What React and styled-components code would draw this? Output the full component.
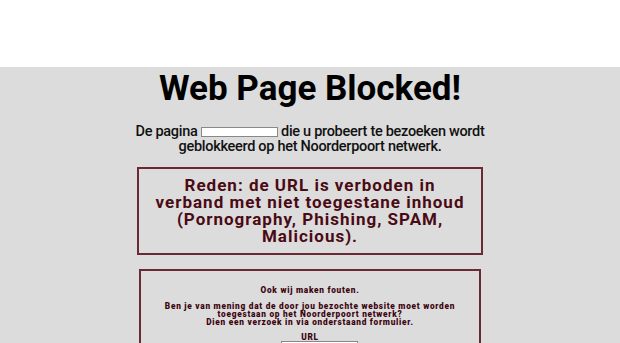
import React from "react";
import styled, { createGlobalStyle } from "styled-components";

const Global = createGlobalStyle`
  html, body { margin: 0; padding: 0; }
  body { background: #dcdcdc; font-family: Roboto, "Liberation Sans", sans-serif; }
`;

const Header = styled.header`
  height: 67px;
  background: #ffffff;
`;

const Main = styled.main`
  width: 350px;
  margin: 0 auto;
  display: flex;
  flex-direction: column;
  align-items: center;
  text-align: center;
`;

const Title = styled.h1`
  margin: 2px 0 0;
  font-size: 35px;
  font-weight: 700;
  line-height: 40px;
  color: #000;
  white-space: nowrap;
`;

const Intro = styled.p`
  margin: 15px 0 0;
  font-size: 14.5px;
  line-height: 15px;
  font-weight: 500;
  letter-spacing: -0.3px;
  color: #111;
  width: 360px;
  flex-shrink: 0;
`;

const UrlField = styled.input`
  width: 75px;
  height: 8px;
  padding: 0;
  border: 1px solid #888;
  background: #fff;
  vertical-align: middle;
  margin: 0;
`;

const ReasonBox = styled.div`
  box-sizing: border-box;
  width: 346px;
  margin-top: 13px;
  border: 2px solid #6b2a33;
  padding: 8px 14px;
  color: #4a0a14;
  font-size: 17px;
  font-weight: 700;
  line-height: 17px;
  letter-spacing: 1px;
`;

const RequestBox = styled.div`
  box-sizing: border-box;
  width: 342px;
  margin-top: 14px;
  border: 2px solid #6b2a33;
  padding: 15px 8px 0;
  color: #3c0510;
  font-size: 8.3px;
  font-weight: 900;
  line-height: 8px;
  letter-spacing: 0.72px;
  display: flex;
  flex-direction: column;
  align-items: center;
`;

const Small = styled.p`
  margin: 0 0 8px;
`;

const Label = styled.div`
  margin-top: -1px;
`;

const FormInput = styled.input`
  width: 75px;
  height: 10px;
  padding: 0;
  margin: 0 0 0 19px;
  border: 1px solid #888;
  background: #fff;
`;

export default function App() {
  return (
    <>
      <Global />
      <Header />
      <Main>
        <Title>Web Page Blocked!</Title>
        <Intro>
          De pagina <UrlField readOnly /> die u probeert te bezoeken wordt geblokkeerd op het Noorderpoort netwerk.
        </Intro>
        <ReasonBox>
          Reden: de URL is verboden in verband met niet toegestane inhoud (Pornography, Phishing, SPAM, Malicious).
        </ReasonBox>
        <RequestBox>
          <Small>Ook wij maken fouten.</Small>
          <Small>
            Ben je van mening dat de door jou bezochte website moet worden toegestaan op het Noorderpoort netwerk?
            <br />
            Dien een verzoek in via onderstaand formulier.
          </Small>
          <Label>URL</Label>
          <FormInput />
        </RequestBox>
      </Main>
    </>
  );
}
